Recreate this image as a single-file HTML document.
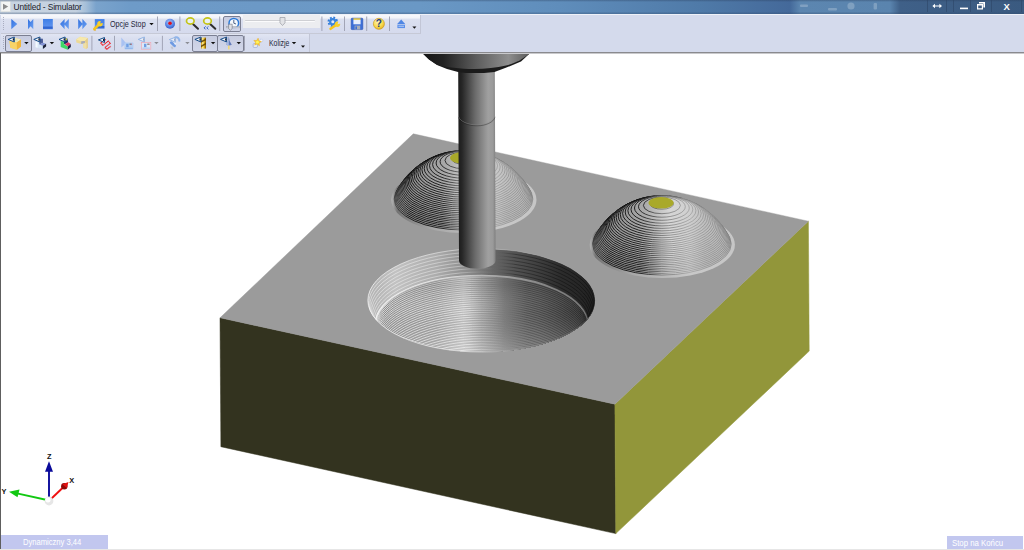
<!DOCTYPE html>
<html lang="pl">
<head>
<meta charset="utf-8">
<title>Untitled - Simulator</title>
<style>
html,body{margin:0;padding:0;}
body{width:1024px;height:550px;overflow:hidden;background:#fff;position:relative;font-family:"Liberation Sans",sans-serif;}
#titlebar{position:absolute;left:0;top:0;width:1024px;height:14px;
 background:linear-gradient(to right,#c9d5e2 0px,#c3d0df 76px,#a5bfd9 86px,#7aa3cc 96px,#6e9bc8 130px,#6c99c6 260px,#6a98c5 420px,#5f8dbb 560px,#4f7aa8 700px,#44699a 790px,#5c86b0 800px,#5a84ae 890px,#3f6088 900px,#3a5a80 1024px);}
#titlebar .shade{position:absolute;left:0;top:0;width:1024px;height:14px;background:linear-gradient(to bottom,rgba(40,60,90,.4) 0,rgba(255,255,255,0) 2px,rgba(255,255,255,0) 11.5px,rgba(50,75,110,.32) 13.4px,rgba(50,75,110,.32) 14px);}
#title{position:absolute;left:13.5px;top:1.2px;font-size:8.4px;letter-spacing:-0.15px;line-height:12px;color:#1a1a2a;white-space:nowrap;}
#tbbg{position:absolute;left:0;top:14px;width:1024px;height:39px;background:#d4daec;border-top:1px solid #eef1f8;box-sizing:border-box;}
#tb1{position:absolute;left:1px;top:15px;width:419px;height:18px;background:linear-gradient(to bottom,#f7f8fc 0,#f1f3f9 3px,#dbe0f0 4.2px,#d5daed 18px);border-right:1px solid #c2c6d6;border-bottom:1px solid #c6c9d6;}
#tb2{position:absolute;left:1px;top:34px;width:308px;height:18px;background:linear-gradient(to bottom,#e1e5f3 0,#d9deef 5px,#d5dbee 18px);border-right:1px solid #c2c6d6;}
#tbline{position:absolute;left:0;top:52px;width:1024px;height:1px;background:#8a8a8e;}
#tbline2{position:absolute;left:0;top:53px;width:1024px;height:1px;background:#c9c9cc;}
#leftborder{position:absolute;left:0;top:53px;width:1.3px;height:496px;background:#5e5e5e;}
#bottomline{position:absolute;left:0;top:548.8px;width:1024px;height:1.2px;background:#e6e6e6;}
.status{position:absolute;background:#c2c7ef;color:#fff;font-size:8.7px;line-height:14px;white-space:nowrap;}
#st1{left:1px;top:534.6px;width:107px;height:14.2px;}
#st1 span{position:absolute;left:22px;top:0.8px;transform-origin:0 0;transform:scaleX(0.875);}
#st2{left:946.7px;top:536.2px;width:76.2px;height:12.6px;}
#st2 span{position:absolute;left:5.2px;top:-0.4px;transform-origin:0 0;transform:scaleX(0.898);}
.sep{position:absolute;width:1px;height:15px;background:#b4b7c6;}
.tx{position:absolute;font-size:8.4px;line-height:10px;color:#26263a;white-space:nowrap;transform-origin:0 0;}
svg{position:absolute;left:0;top:0;}
.pbtn{position:absolute;border:1px solid #7b7f92;border-radius:2px;background:linear-gradient(to bottom,#c7cce0,#d2d7ea);}
#slbg{position:absolute;left:243px;top:15px;width:77px;height:13px;background:#ecedf0;}
</style>
</head>
<body>
<!-- 3D viewport -->
<svg id="scene" width="1024" height="550" viewBox="0 0 1024 550">
<defs>
<linearGradient id="gTool" x1="0" x2="1" y1="0" y2="0">
 <stop offset="0" stop-color="#1c1c1c"/><stop offset="0.1" stop-color="#262626"/><stop offset="0.45" stop-color="#6a6a6a"/><stop offset="0.8" stop-color="#a0a0a0"/><stop offset="0.93" stop-color="#9a9a9a"/><stop offset="1" stop-color="#7e7e7e"/>
</linearGradient>
<linearGradient id="gHolder" gradientUnits="userSpaceOnUse" x1="422" x2="530" y1="0" y2="0">
 <stop offset="0" stop-color="#141414"/><stop offset="0.2" stop-color="#222"/><stop offset="0.5" stop-color="#5c5c5c"/><stop offset="0.8" stop-color="#8e8e8e"/><stop offset="1" stop-color="#5a5a5a"/>
</linearGradient>
<linearGradient id="gD1" gradientUnits="userSpaceOnUse" x1="391.5" x2="535.5" y1="0" y2="0">
 <stop offset="0" stop-color="#7a7a7a"/><stop offset="0.15" stop-color="#8e8e8e"/><stop offset="0.38" stop-color="#aaa"/><stop offset="0.55" stop-color="#d6d6d6"/><stop offset="0.68" stop-color="#d0d0d0"/><stop offset="0.8" stop-color="#bebebe"/><stop offset="1" stop-color="#b4b4b4"/>
</linearGradient>
<linearGradient id="gS1" gradientUnits="userSpaceOnUse" x1="391.5" x2="535.5" y1="0" y2="0">
 <stop offset="0" stop-color="#000" stop-opacity="0.3"/><stop offset="0.05" stop-color="#000" stop-opacity="0.5"/><stop offset="0.12" stop-color="#000" stop-opacity="0.82"/><stop offset="0.35" stop-color="#000" stop-opacity="0.8"/><stop offset="0.5" stop-color="#333" stop-opacity="0.5"/><stop offset="0.7" stop-color="#666" stop-opacity="0.35"/><stop offset="1" stop-color="#555" stop-opacity="0.4"/>
</linearGradient>
<linearGradient id="gR1" gradientUnits="userSpaceOnUse" x1="391.5" x2="535.5" y1="0" y2="0">
 <stop offset="0" stop-color="#b4b4b4"/><stop offset="0.04" stop-color="#747474"/><stop offset="0.3" stop-color="#a8a8a8"/><stop offset="0.7" stop-color="#c8c8c8"/><stop offset="1" stop-color="#c6c6c6"/>
</linearGradient>
<linearGradient id="gD2" gradientUnits="userSpaceOnUse" x1="589.9" x2="733.9" y1="0" y2="0">
 <stop offset="0" stop-color="#7a7a7a"/><stop offset="0.15" stop-color="#8e8e8e"/><stop offset="0.38" stop-color="#aaa"/><stop offset="0.55" stop-color="#d6d6d6"/><stop offset="0.68" stop-color="#d0d0d0"/><stop offset="0.8" stop-color="#bebebe"/><stop offset="1" stop-color="#b4b4b4"/>
</linearGradient>
<linearGradient id="gS2" gradientUnits="userSpaceOnUse" x1="589.9" x2="733.9" y1="0" y2="0">
 <stop offset="0" stop-color="#000" stop-opacity="0.3"/><stop offset="0.05" stop-color="#000" stop-opacity="0.5"/><stop offset="0.12" stop-color="#000" stop-opacity="0.82"/><stop offset="0.35" stop-color="#000" stop-opacity="0.8"/><stop offset="0.5" stop-color="#333" stop-opacity="0.5"/><stop offset="0.7" stop-color="#666" stop-opacity="0.35"/><stop offset="1" stop-color="#555" stop-opacity="0.4"/>
</linearGradient>
<linearGradient id="gR2" gradientUnits="userSpaceOnUse" x1="589.9" x2="733.9" y1="0" y2="0">
 <stop offset="0" stop-color="#b4b4b4"/><stop offset="0.04" stop-color="#747474"/><stop offset="0.3" stop-color="#a8a8a8"/><stop offset="0.7" stop-color="#c8c8c8"/><stop offset="1" stop-color="#c6c6c6"/>
</linearGradient>
<clipPath id="cB"><ellipse cx="481.6" cy="300.4" rx="113.7" ry="51.7"/></clipPath>
<linearGradient id="gBw" gradientUnits="userSpaceOnUse" x1="367.9" x2="595.3" y1="0" y2="0">
 <stop offset="0" stop-color="#b0b0b0"/><stop offset="0.12" stop-color="#c2c2c2"/><stop offset="0.3" stop-color="#acacac"/><stop offset="0.45" stop-color="#888"/><stop offset="0.55" stop-color="#666"/><stop offset="0.7" stop-color="#494949"/><stop offset="0.85" stop-color="#2c2c2c"/><stop offset="1" stop-color="#212121"/>
</linearGradient>
<linearGradient id="gBk" gradientUnits="userSpaceOnUse" x1="367.9" x2="595.3" y1="0" y2="0">
 <stop offset="0" stop-color="#fff" stop-opacity="0.6"/><stop offset="0.4" stop-color="#fff" stop-opacity="0.45"/><stop offset="0.52" stop-color="#999" stop-opacity="0.25"/><stop offset="0.65" stop-color="#000" stop-opacity="0.4"/><stop offset="1" stop-color="#000" stop-opacity="0.5"/>
</linearGradient>
<linearGradient id="gBs" gradientUnits="userSpaceOnUse" x1="367.9" x2="595.3" y1="0" y2="0">
 <stop offset="0" stop-color="#767676"/><stop offset="0.1" stop-color="#8e8e8e"/><stop offset="0.3" stop-color="#9a9a9a"/><stop offset="0.42" stop-color="#bcbcbc"/><stop offset="0.5" stop-color="#9a9a9a"/><stop offset="0.6" stop-color="#7a7a7a"/><stop offset="0.75" stop-color="#666"/><stop offset="0.88" stop-color="#4e4e4e"/><stop offset="1" stop-color="#363636"/>
</linearGradient>
<linearGradient id="gBl" gradientUnits="userSpaceOnUse" x1="367.9" x2="595.3" y1="0" y2="0">
 <stop offset="0" stop-color="#fff" stop-opacity="0.75"/><stop offset="0.45" stop-color="#fff" stop-opacity="0.6"/><stop offset="0.56" stop-color="#bbb" stop-opacity="0.3"/><stop offset="0.7" stop-color="#000" stop-opacity="0.3"/><stop offset="1" stop-color="#000" stop-opacity="0.4"/>
</linearGradient>
<linearGradient id="gBi" gradientUnits="userSpaceOnUse" x1="367.9" x2="595.3" y1="0" y2="0">
 <stop offset="0" stop-color="#fff" stop-opacity="0.8"/><stop offset="0.5" stop-color="#e0e0e0" stop-opacity="0.65"/><stop offset="1" stop-color="#9a9a9a" stop-opacity="0.6"/>
</linearGradient>
<linearGradient id="gBe" gradientUnits="userSpaceOnUse" x1="367.9" x2="595.3" y1="0" y2="0">
 <stop offset="0" stop-color="#fff" stop-opacity="0.75"/><stop offset="0.45" stop-color="#e8e8e8" stop-opacity="0.55"/><stop offset="0.7" stop-color="#bbb" stop-opacity="0.25"/><stop offset="1" stop-color="#aaa" stop-opacity="0.3"/>
</linearGradient>
<linearGradient id="gBv" gradientUnits="userSpaceOnUse" x1="0" x2="0" y1="285" y2="352">
 <stop offset="0" stop-color="#000" stop-opacity="0.12"/><stop offset="0.4" stop-color="#888" stop-opacity="0"/><stop offset="1" stop-color="#fff" stop-opacity="0.22"/>
</linearGradient>
</defs>
<polygon points="220,317.8 614.9,404.2 615.8,533.6 220.9,446.7" fill="#33331f" stroke="#33331f" stroke-width="0.5" stroke-linejoin="round"/>
<polygon points="614.9,404.2 808.4,221.2 809.2,351.1 615.8,533.6" fill="#92963a" stroke="#92963a" stroke-width="0.5" stroke-linejoin="round"/>
<polygon points="413.3,133.8 808.4,221.2 614.9,404.2 220,317.8" fill="#9b9b9b" stroke="#9b9b9b" stroke-width="0.4" stroke-linejoin="round"/>
<g id="dome1">
<ellipse cx="463.9" cy="199.8" rx="72.6" ry="33.2" fill="url(#gR1)"/>
<ellipse cx="463.5" cy="199" rx="69.4" ry="31" fill="url(#gD1)" stroke="url(#gS1)" stroke-width="1"/>
<ellipse cx="463.5" cy="197.7" rx="68.7" ry="30.7" fill="url(#gD1)" stroke="url(#gS1)" stroke-width="1"/>
<ellipse cx="463.5" cy="196.3" rx="68" ry="30.4" fill="url(#gD1)" stroke="url(#gS1)" stroke-width="1"/>
<ellipse cx="463.5" cy="195" rx="67.2" ry="30.1" fill="url(#gD1)" stroke="url(#gS1)" stroke-width="1"/>
<ellipse cx="463.5" cy="193.7" rx="66.4" ry="29.7" fill="url(#gD1)" stroke="url(#gS1)" stroke-width="1"/>
<ellipse cx="463.5" cy="192.3" rx="65.6" ry="29.3" fill="url(#gD1)" stroke="url(#gS1)" stroke-width="1"/>
<ellipse cx="463.5" cy="191" rx="64.7" ry="28.9" fill="url(#gD1)" stroke="url(#gS1)" stroke-width="1"/>
<ellipse cx="463.5" cy="189.7" rx="63.7" ry="28.5" fill="url(#gD1)" stroke="url(#gS1)" stroke-width="1"/>
<ellipse cx="463.5" cy="188.3" rx="62.7" ry="28" fill="url(#gD1)" stroke="url(#gS1)" stroke-width="1"/>
<ellipse cx="463.5" cy="187" rx="61.7" ry="27.6" fill="url(#gD1)" stroke="url(#gS1)" stroke-width="1"/>
<ellipse cx="463.5" cy="185.7" rx="60.6" ry="27.1" fill="url(#gD1)" stroke="url(#gS1)" stroke-width="1"/>
<ellipse cx="463.5" cy="184.3" rx="59.4" ry="26.6" fill="url(#gD1)" stroke="url(#gS1)" stroke-width="1"/>
<ellipse cx="463.5" cy="183" rx="58.2" ry="26" fill="url(#gD1)" stroke="url(#gS1)" stroke-width="1"/>
<ellipse cx="463.5" cy="181.7" rx="56.9" ry="25.4" fill="url(#gD1)" stroke="url(#gS1)" stroke-width="1"/>
<ellipse cx="463.5" cy="180.4" rx="55.6" ry="24.8" fill="url(#gD1)" stroke="url(#gS1)" stroke-width="1"/>
<ellipse cx="463.5" cy="179" rx="54.2" ry="24.2" fill="url(#gD1)" stroke="url(#gS1)" stroke-width="1"/>
<ellipse cx="463.5" cy="177.7" rx="52.7" ry="23.5" fill="url(#gD1)" stroke="url(#gS1)" stroke-width="1"/>
<ellipse cx="463.5" cy="176.4" rx="51.1" ry="22.8" fill="url(#gD1)" stroke="url(#gS1)" stroke-width="1"/>
<ellipse cx="463.5" cy="175" rx="49.4" ry="22.1" fill="url(#gD1)" stroke="url(#gS1)" stroke-width="1"/>
<ellipse cx="463.5" cy="173.7" rx="47.6" ry="21.3" fill="url(#gD1)" stroke="url(#gS1)" stroke-width="1"/>
<ellipse cx="463.5" cy="172.4" rx="45.7" ry="20.4" fill="url(#gD1)" stroke="url(#gS1)" stroke-width="1"/>
<ellipse cx="463.5" cy="171" rx="43.7" ry="19.5" fill="url(#gD1)" stroke="url(#gS1)" stroke-width="1"/>
<ellipse cx="463.5" cy="169.7" rx="41.6" ry="18.6" fill="url(#gD1)" stroke="url(#gS1)" stroke-width="1"/>
<ellipse cx="463.5" cy="168.4" rx="39.3" ry="17.5" fill="url(#gD1)" stroke="url(#gS1)" stroke-width="1"/>
<ellipse cx="463.5" cy="167" rx="36.7" ry="16.4" fill="url(#gD1)" stroke="url(#gS1)" stroke-width="1"/>
<ellipse cx="463.5" cy="165.7" rx="34" ry="15.2" fill="url(#gD1)" stroke="url(#gS1)" stroke-width="1"/>
<ellipse cx="463.5" cy="164.4" rx="30.9" ry="13.8" fill="url(#gD1)" stroke="url(#gS1)" stroke-width="1"/>
<ellipse cx="463.5" cy="163" rx="27.4" ry="12.3" fill="url(#gD1)" stroke="url(#gS1)" stroke-width="1"/>
<ellipse cx="463.5" cy="161.7" rx="23.4" ry="10.5" fill="url(#gD1)" stroke="url(#gS1)" stroke-width="1"/>
<ellipse cx="463.5" cy="160.4" rx="18.5" ry="8.3" fill="url(#gD1)" stroke="url(#gS1)" stroke-width="1"/>
<ellipse cx="463.5" cy="159" rx="11.7" ry="5.2" fill="url(#gD1)" stroke="url(#gS1)" stroke-width="1"/>
<ellipse cx="462.7" cy="157.8" rx="12.6" ry="5.8" fill="#a9a92a"/>
</g>
<g id="dome2">
<ellipse cx="662.3" cy="244.8" rx="72.6" ry="33.2" fill="url(#gR2)"/>
<ellipse cx="661.9" cy="244" rx="69.4" ry="31" fill="url(#gD2)" stroke="url(#gS2)" stroke-width="1"/>
<ellipse cx="661.9" cy="242.7" rx="68.7" ry="30.7" fill="url(#gD2)" stroke="url(#gS2)" stroke-width="1"/>
<ellipse cx="661.9" cy="241.3" rx="68" ry="30.4" fill="url(#gD2)" stroke="url(#gS2)" stroke-width="1"/>
<ellipse cx="661.9" cy="240" rx="67.2" ry="30.1" fill="url(#gD2)" stroke="url(#gS2)" stroke-width="1"/>
<ellipse cx="661.9" cy="238.7" rx="66.4" ry="29.7" fill="url(#gD2)" stroke="url(#gS2)" stroke-width="1"/>
<ellipse cx="661.9" cy="237.3" rx="65.6" ry="29.3" fill="url(#gD2)" stroke="url(#gS2)" stroke-width="1"/>
<ellipse cx="661.9" cy="236" rx="64.7" ry="28.9" fill="url(#gD2)" stroke="url(#gS2)" stroke-width="1"/>
<ellipse cx="661.9" cy="234.7" rx="63.7" ry="28.5" fill="url(#gD2)" stroke="url(#gS2)" stroke-width="1"/>
<ellipse cx="661.9" cy="233.3" rx="62.7" ry="28" fill="url(#gD2)" stroke="url(#gS2)" stroke-width="1"/>
<ellipse cx="661.9" cy="232" rx="61.7" ry="27.6" fill="url(#gD2)" stroke="url(#gS2)" stroke-width="1"/>
<ellipse cx="661.9" cy="230.7" rx="60.6" ry="27.1" fill="url(#gD2)" stroke="url(#gS2)" stroke-width="1"/>
<ellipse cx="661.9" cy="229.3" rx="59.4" ry="26.6" fill="url(#gD2)" stroke="url(#gS2)" stroke-width="1"/>
<ellipse cx="661.9" cy="228" rx="58.2" ry="26" fill="url(#gD2)" stroke="url(#gS2)" stroke-width="1"/>
<ellipse cx="661.9" cy="226.7" rx="56.9" ry="25.4" fill="url(#gD2)" stroke="url(#gS2)" stroke-width="1"/>
<ellipse cx="661.9" cy="225.4" rx="55.6" ry="24.8" fill="url(#gD2)" stroke="url(#gS2)" stroke-width="1"/>
<ellipse cx="661.9" cy="224" rx="54.2" ry="24.2" fill="url(#gD2)" stroke="url(#gS2)" stroke-width="1"/>
<ellipse cx="661.9" cy="222.7" rx="52.7" ry="23.5" fill="url(#gD2)" stroke="url(#gS2)" stroke-width="1"/>
<ellipse cx="661.9" cy="221.4" rx="51.1" ry="22.8" fill="url(#gD2)" stroke="url(#gS2)" stroke-width="1"/>
<ellipse cx="661.9" cy="220" rx="49.4" ry="22.1" fill="url(#gD2)" stroke="url(#gS2)" stroke-width="1"/>
<ellipse cx="661.9" cy="218.7" rx="47.6" ry="21.3" fill="url(#gD2)" stroke="url(#gS2)" stroke-width="1"/>
<ellipse cx="661.9" cy="217.4" rx="45.7" ry="20.4" fill="url(#gD2)" stroke="url(#gS2)" stroke-width="1"/>
<ellipse cx="661.9" cy="216" rx="43.7" ry="19.5" fill="url(#gD2)" stroke="url(#gS2)" stroke-width="1"/>
<ellipse cx="661.9" cy="214.7" rx="41.6" ry="18.6" fill="url(#gD2)" stroke="url(#gS2)" stroke-width="1"/>
<ellipse cx="661.9" cy="213.4" rx="39.3" ry="17.5" fill="url(#gD2)" stroke="url(#gS2)" stroke-width="1"/>
<ellipse cx="661.9" cy="212" rx="36.7" ry="16.4" fill="url(#gD2)" stroke="url(#gS2)" stroke-width="1"/>
<ellipse cx="661.9" cy="210.7" rx="34" ry="15.2" fill="url(#gD2)" stroke="url(#gS2)" stroke-width="1"/>
<ellipse cx="661.9" cy="209.4" rx="30.9" ry="13.8" fill="url(#gD2)" stroke="url(#gS2)" stroke-width="1"/>
<ellipse cx="661.9" cy="208" rx="27.4" ry="12.3" fill="url(#gD2)" stroke="url(#gS2)" stroke-width="1"/>
<ellipse cx="661.9" cy="206.7" rx="23.4" ry="10.5" fill="url(#gD2)" stroke="url(#gS2)" stroke-width="1"/>
<ellipse cx="661.9" cy="205.4" rx="18.5" ry="8.3" fill="url(#gD2)" stroke="url(#gS2)" stroke-width="1"/>
<ellipse cx="661.9" cy="204" rx="11.7" ry="5.2" fill="url(#gD2)" stroke="url(#gS2)" stroke-width="1"/>
<ellipse cx="661.1" cy="202.8" rx="12.6" ry="5.8" fill="#a9a92a"/>
</g>
<g id="bowl" clip-path="url(#cB)">
<ellipse cx="481.6" cy="300.4" rx="113.7" ry="51.7" fill="url(#gBw)"/>
<ellipse cx="481.6" cy="303.3" rx="112.8" ry="51.3" fill="url(#gBw)" stroke="url(#gBk)" stroke-width="0.8"/>
<ellipse cx="481.6" cy="306.2" rx="111.9" ry="50.9" fill="url(#gBw)" stroke="url(#gBk)" stroke-width="0.8"/>
<ellipse cx="481.6" cy="309.2" rx="111" ry="50.5" fill="url(#gBw)" stroke="url(#gBk)" stroke-width="0.8"/>
<ellipse cx="481.6" cy="312.1" rx="110.1" ry="50.1" fill="url(#gBw)" stroke="url(#gBk)" stroke-width="0.8"/>
<ellipse cx="481.6" cy="315" rx="109.2" ry="49.7" fill="url(#gBw)" stroke="url(#gBk)" stroke-width="0.8"/>
<ellipse cx="481.6" cy="317.9" rx="108.3" ry="49.3" fill="url(#gBw)" stroke="url(#gBk)" stroke-width="0.8"/>
<ellipse cx="481.6" cy="320.9" rx="107.4" ry="48.9" fill="url(#gBw)" stroke="url(#gBk)" stroke-width="0.8"/>
<ellipse cx="481.6" cy="323.8" rx="106.5" ry="48.5" fill="url(#gBw)" stroke="url(#gBk)" stroke-width="0.8"/>
<ellipse cx="481.6" cy="323.8" rx="106" ry="48.2" fill="url(#gBs)" stroke="url(#gBi)" stroke-width="1.8"/>
<ellipse cx="481.6" cy="325.7" rx="106" ry="48.2" fill="url(#gBs)" stroke="url(#gBl)" stroke-width="0.95"/>
<ellipse cx="481.6" cy="327.6" rx="105.9" ry="48.2" fill="url(#gBs)" stroke="url(#gBl)" stroke-width="0.95"/>
<ellipse cx="481.6" cy="329.4" rx="105.8" ry="48.1" fill="url(#gBs)" stroke="url(#gBl)" stroke-width="0.95"/>
<ellipse cx="481.6" cy="331.3" rx="105.7" ry="48.1" fill="url(#gBs)" stroke="url(#gBl)" stroke-width="0.95"/>
<ellipse cx="481.6" cy="333.2" rx="105.5" ry="48" fill="url(#gBs)" stroke="url(#gBl)" stroke-width="0.95"/>
<ellipse cx="481.6" cy="335.1" rx="105.2" ry="47.9" fill="url(#gBs)" stroke="url(#gBl)" stroke-width="0.95"/>
<ellipse cx="481.6" cy="336.9" rx="105" ry="47.8" fill="url(#gBs)" stroke="url(#gBl)" stroke-width="0.95"/>
<ellipse cx="481.6" cy="338.8" rx="104.7" ry="47.6" fill="url(#gBs)" stroke="url(#gBl)" stroke-width="0.95"/>
<ellipse cx="481.6" cy="340.7" rx="104.3" ry="47.5" fill="url(#gBs)" stroke="url(#gBl)" stroke-width="0.95"/>
<ellipse cx="481.6" cy="342.6" rx="103.9" ry="47.3" fill="url(#gBs)" stroke="url(#gBl)" stroke-width="0.95"/>
<ellipse cx="481.6" cy="344.5" rx="103.5" ry="47.1" fill="url(#gBs)" stroke="url(#gBl)" stroke-width="0.95"/>
<ellipse cx="481.6" cy="346.3" rx="103" ry="46.8" fill="url(#gBs)" stroke="url(#gBl)" stroke-width="0.95"/>
<ellipse cx="481.6" cy="348.2" rx="102.4" ry="46.6" fill="url(#gBs)" stroke="url(#gBl)" stroke-width="0.95"/>
<ellipse cx="481.6" cy="350.1" rx="101.8" ry="46.3" fill="url(#gBs)" stroke="url(#gBl)" stroke-width="0.95"/>
<ellipse cx="481.6" cy="352" rx="101.2" ry="46.1" fill="url(#gBs)" stroke="url(#gBl)" stroke-width="0.95"/>
<ellipse cx="481.6" cy="353.8" rx="100.5" ry="45.7" fill="url(#gBs)" stroke="url(#gBl)" stroke-width="0.95"/>
<ellipse cx="481.6" cy="355.7" rx="99.8" ry="45.4" fill="url(#gBs)" stroke="url(#gBl)" stroke-width="0.95"/>
<ellipse cx="481.6" cy="357.6" rx="99" ry="45.1" fill="url(#gBs)" stroke="url(#gBl)" stroke-width="0.95"/>
<ellipse cx="481.6" cy="359.5" rx="98.2" ry="44.7" fill="url(#gBs)" stroke="url(#gBl)" stroke-width="0.95"/>
<ellipse cx="481.6" cy="361.3" rx="97.3" ry="44.3" fill="url(#gBs)" stroke="url(#gBl)" stroke-width="0.95"/>
<ellipse cx="481.6" cy="363.2" rx="96.4" ry="43.9" fill="url(#gBs)" stroke="url(#gBl)" stroke-width="0.95"/>
<ellipse cx="481.6" cy="365.1" rx="95.4" ry="43.4" fill="url(#gBs)" stroke="url(#gBl)" stroke-width="0.95"/>
<ellipse cx="481.6" cy="367" rx="94.4" ry="42.9" fill="url(#gBs)" stroke="url(#gBl)" stroke-width="0.95"/>
<ellipse cx="481.6" cy="368.9" rx="93.3" ry="42.4" fill="url(#gBs)" stroke="url(#gBl)" stroke-width="0.95"/>
<ellipse cx="481.6" cy="370.7" rx="92.1" ry="41.9" fill="url(#gBs)" stroke="url(#gBl)" stroke-width="0.95"/>
<ellipse cx="481.6" cy="372.6" rx="90.9" ry="41.3" fill="url(#gBs)" stroke="url(#gBl)" stroke-width="0.95"/>
<ellipse cx="481.6" cy="374.5" rx="89.6" ry="40.8" fill="url(#gBs)" stroke="url(#gBl)" stroke-width="0.95"/>
<ellipse cx="481.6" cy="376.4" rx="88.2" ry="40.1" fill="url(#gBs)" stroke="url(#gBl)" stroke-width="0.95"/>
<ellipse cx="481.6" cy="378.2" rx="86.8" ry="39.5" fill="url(#gBs)" stroke="url(#gBl)" stroke-width="0.95"/>
<ellipse cx="481.6" cy="380.1" rx="85.2" ry="38.8" fill="url(#gBs)" stroke="url(#gBl)" stroke-width="0.95"/>
<ellipse cx="481.6" cy="382" rx="83.7" ry="38.1" fill="url(#gBs)" stroke="url(#gBl)" stroke-width="0.95"/>
<ellipse cx="481.6" cy="383.9" rx="82" ry="37.3" fill="url(#gBs)" stroke="url(#gBl)" stroke-width="0.95"/>
<ellipse cx="481.6" cy="385.8" rx="80.2" ry="36.5" fill="url(#gBs)" stroke="url(#gBl)" stroke-width="0.95"/>
<ellipse cx="481.6" cy="387.6" rx="78.3" ry="35.6" fill="url(#gBs)" stroke="url(#gBl)" stroke-width="0.95"/>
<ellipse cx="481.6" cy="389.5" rx="76.4" ry="34.8" fill="url(#gBs)" stroke="url(#gBl)" stroke-width="0.95"/>
<ellipse cx="481.6" cy="391.4" rx="74.3" ry="33.8" fill="url(#gBs)" stroke="url(#gBl)" stroke-width="0.95"/>
<ellipse cx="481.6" cy="323.8" rx="106" ry="48.2" fill="url(#gBv)"/>
</g>
<ellipse cx="481.6" cy="300.4" rx="113.7" ry="51.7" fill="none" stroke="url(#gBe)" stroke-width="1"/>
<g id="tool">
<path d="M458.2,70 L494.8,70 L495.6,260.5 C495.6,265 487.5,268.8 477.3,268.8 C467,268.8 459,265 459,260.5 Z" fill="url(#gTool)"/>
<path d="M422.3,53 L530.2,53 L521,61.4 L506.4,67.6 L494.5,72 L484,73 L466,73 L458,72 L447,69 L437,65 L429,59.5 Z" fill="#1b1b1b"/>
<path d="M422.3,53 L530.2,53 C523,59 516,63 506,65.6 C496,68 486,69 474,69 C460,69 447,67.5 437,64.8 L429,59.5 Z" fill="url(#gHolder)"/>
<path d="M458.4,116.5 C460,121.5 468,125 477,125 C486,125 493.5,121.5 495,116.5" fill="none" stroke="#8a8a8a" stroke-opacity="0.7" stroke-width="0.7"/>
<path d="M458.4,117.3 C460,122.3 468,125.8 477,125.8 C486,125.8 493.5,122.3 495,117.3" fill="none" stroke="#111" stroke-opacity="0.6" stroke-width="0.6"/>
</g>
<g id="gizmo" font-family="Liberation Sans, sans-serif" font-weight="bold" font-size="7.4" fill="#111">
<line x1="47" y1="500" x2="17" y2="493.4" stroke="#12c812" stroke-width="1.8"/>
<polygon points="9,491.8 19.5,489.5 17.5,497.2" fill="#12c812"/>
<line x1="51.5" y1="498.5" x2="63" y2="487.5" stroke="#f01010" stroke-width="1.9"/>
<circle cx="64.3" cy="486.2" r="3.2" fill="#8e0a0a"/>
<polygon points="68.5,482 66.8,488 62.3,484.2" fill="#e01010"/>
<line x1="49" y1="498" x2="49" y2="471" stroke="#0a0a9a" stroke-width="1.9"/>
<polygon points="49,461.3 53,471.8 45,471.8" fill="#0a0a9a"/>
<circle cx="49" cy="501" r="4.4" fill="#e6e6e6"/>
<circle cx="48" cy="499.8" r="2.6" fill="#fff"/>
<text x="47" y="458.6">Z</text>
<text x="69.2" y="482.8">X</text>
<text x="1.6" y="494.2">Y</text>
</g>
</svg>

<div id="titlebar"><div class="shade"></div></div>
<div id="title">Untitled - Simulator</div>
<div id="tbbg"></div>
<div id="tb1"></div>
<div id="tb2"></div>
<div id="tbline"></div><div id="tbline2"></div>
<div id="leftborder"></div>
<div id="bottomline"></div>
<div class="status" id="st1"><span>Dynamiczny 3,44</span></div>
<div class="status" id="st2"><span>Stop na Końcu</span></div>
<div class="pbtn" style="left:223px;top:16px;width:16px;height:14px;"></div>
<div class="pbtn" style="left:5px;top:35px;width:25px;height:15px;"></div>
<div class="pbtn" style="left:192px;top:35px;width:24px;height:15px;"></div>
<div class="pbtn" style="left:217px;top:35px;width:25px;height:15px;"></div>
<div id="slbg"></div>
<div class="tx" id="t1" style="left:110.4px;top:19.1px;transform:scaleX(0.86);">Opcje Stop</div>
<div class="tx" id="t2" style="left:268.5px;top:37.9px;transform:scaleX(0.82);">Kolizje</div>
<svg id="icons" width="1024" height="54" viewBox="0 0 1024 54">
<defs>
<linearGradient id="bl" x1="0" y1="0" x2="1" y2="1"><stop offset="0" stop-color="#2f6fe0"/><stop offset="1" stop-color="#6ea2f2"/></linearGradient>
<linearGradient id="bl2" x1="0" y1="0" x2="0" y2="1"><stop offset="0" stop-color="#3f7fe6"/><stop offset="0.7" stop-color="#5a90ee"/><stop offset="0.78" stop-color="#2f62cc"/><stop offset="1" stop-color="#3a72dc"/></linearGradient>
<radialGradient id="rec" cx="0.45" cy="0.35" r="0.7"><stop offset="0" stop-color="#a8c4f8"/><stop offset="0.6" stop-color="#5a84e4"/><stop offset="1" stop-color="#2c55c4"/></radialGradient>
<radialGradient id="hlp" cx="0.4" cy="0.3" r="0.8"><stop offset="0" stop-color="#fff6b0"/><stop offset="0.6" stop-color="#f8d84a"/><stop offset="1" stop-color="#e0a820"/></radialGradient>
<linearGradient id="gold" x1="0" y1="0" x2="1" y2="0"><stop offset="0" stop-color="#c88a00"/><stop offset="0.35" stop-color="#fff2a0"/><stop offset="0.6" stop-color="#f0c020"/><stop offset="1" stop-color="#7a5200"/></linearGradient>
<linearGradient id="cube" x1="0" y1="0" x2="1" y2="1"><stop offset="0" stop-color="#fbe08a"/><stop offset="1" stop-color="#f0b030"/></linearGradient>
<g id="eye"><path d="M0.3,2.6 L6.4,0.2 L6.4,5.2 Z" fill="#f2f6fc" stroke="#0b4484" stroke-width="0.95" stroke-linejoin="round"/><rect x="4.9" y="1.5" width="1.3" height="2.3" fill="#141c30"/></g>
<g id="eyed"><path d="M0.3,2.6 L6.4,0.2 L6.4,5.2 Z" fill="#e8eefa" stroke="#8fb2e4" stroke-width="0.95" stroke-linejoin="round"/><rect x="5" y="1.5" width="1.2" height="2.3" fill="#a0a8bc"/></g>
<path id="dd" d="M-2.2,-1.1 L2.2,-1.1 L0,1.1 Z"/>
</defs>
<!-- grips -->
<g fill="#a9adc0"><rect x="3" y="17" width="1" height="1"/><rect x="3" y="19" width="1" height="1"/><rect x="3" y="21" width="1" height="1"/><rect x="3" y="23" width="1" height="1"/><rect x="3" y="25" width="1" height="1"/><rect x="3" y="27" width="1" height="1"/><rect x="3" y="29" width="1" height="1"/>
<rect x="3" y="36" width="1" height="1"/><rect x="3" y="38" width="1" height="1"/><rect x="3" y="40" width="1" height="1"/><rect x="3" y="42" width="1" height="1"/><rect x="3" y="44" width="1" height="1"/><rect x="3" y="46" width="1" height="1"/><rect x="3" y="48" width="1" height="1"/></g>
<!-- row 1 -->
<polygon points="11.3,19 17.3,24 11.3,29.2" fill="url(#bl)"/>
<path d="M28,19 L30.6,22 L33.3,19 L33.3,29.2 L30.6,26.2 L28,29.2 Z" fill="url(#bl)"/>
<rect x="43" y="19" width="9.8" height="10.2" fill="url(#bl2)"/>
<path d="M64.6,19 L64.6,29.2 L60,24 Z M68.8,19 L68.8,29.2 L64,24 Z" fill="url(#bl)"/>
<path d="M78.2,19 L82.8,24 L78.2,29.2 Z M82.4,19 L87,24 L82.4,29.2 Z" fill="url(#bl)"/>
<rect x="94.8" y="19.1" width="9.7" height="9.5" fill="url(#bl2)"/>
<g><line x1="94.4" y1="29" x2="98.8" y2="24.6" stroke="#f6c61c" stroke-width="2.7" stroke-linecap="round"/><circle cx="100" cy="23.7" r="2.7" fill="#f8d02a"/><path d="M100.1,23.6 L101.2,19.8 L104.4,22.4 Z" fill="#4c82e8"/><path d="M93.6,30 L96,30.4" stroke="#e0a010" stroke-width="0.6"/></g>
<use href="#dd" x="151.5" y="24.2" fill="#111"/>
<rect x="157" y="16.5" width="1" height="14.5" fill="#a2a5b6"/>
<circle cx="170" cy="23.7" r="5" fill="url(#rec)"/><circle cx="170" cy="23.3" r="1.8" fill="#e0101c"/>
<rect x="179.4" y="16.5" width="1" height="14.5" fill="#a2a5b6"/>
<g><line x1="193.2" y1="24.2" x2="198" y2="28.8" stroke="#2e2e2e" stroke-width="2" stroke-linecap="round"/><ellipse cx="190.3" cy="21" rx="3.8" ry="3.1" fill="#e9f0f2" stroke="#c4c418" stroke-width="1.7"/></g>
<g><line x1="210.4" y1="24.2" x2="215.3" y2="28.8" stroke="#2e2e2e" stroke-width="2" stroke-linecap="round"/><ellipse cx="207.5" cy="21" rx="3.8" ry="3.1" fill="#e9f0f2" stroke="#c4c418" stroke-width="1.7"/><path d="M205.6,26.4 L204.1,27.9 L205.6,29.4 M208.3,26.4 L206.8,27.9 L208.3,29.4" fill="none" stroke="#1c50c8" stroke-width="0.9"/></g>
<rect x="219.2" y="16.5" width="1" height="14.5" fill="#a2a5b6"/>
<g><circle cx="233.8" cy="23.2" r="4.8" fill="#f4f8fc" stroke="#2b7ad8" stroke-width="1.5"/><path d="M233.8,20 L233.8,23.2 L236,24" fill="none" stroke="#26406a" stroke-width="0.8"/><rect x="226.4" y="26.4" width="13" height="1.7" fill="#c4c8d2" stroke="#858994" stroke-width="0.3"/><rect x="226" y="28.2" width="13.6" height="2.6" fill="#cfd4e6"/><path d="M228.6,24.2 L232.2,24.2 L232.2,28.6 L230.4,30.2 L228.6,28.6 Z" fill="#dcdee4" stroke="#5e626e" stroke-width="0.5"/></g>
<!-- slider -->
<rect x="245.2" y="20" width="69.6" height="1" fill="#cfd0d4"/><rect x="245.2" y="21" width="69.6" height="1" fill="#fbfbfc"/>
<path d="M280,17.5 L285,17.5 L285,22.8 L282.5,25.5 L280,22.8 Z" fill="#e2e3e6" stroke="#9a9ca4" stroke-width="0.7"/>
<rect x="321.4" y="16.5" width="1" height="14.5" fill="#a2a5b6"/>
<g><circle cx="332.8" cy="21.8" r="4.3" fill="none" stroke="#2f7bd9" stroke-width="1.9" stroke-dasharray="1.75 1.63"/><circle cx="332.8" cy="21.8" r="3.7" fill="#3a84de"/><circle cx="332.8" cy="21.8" r="1.5" fill="#dfe6f6"/>
<g><line x1="330.6" y1="28.8" x2="336" y2="25" stroke="#f6c61c" stroke-width="2.6" stroke-linecap="round"/><circle cx="337.4" cy="24.3" r="2.7" fill="#f8d02a"/><path d="M337.5,24.2 L338.8,20.6 L341.6,23.2 Z" fill="#d8def0"/></g></g>
<rect x="344" y="16.5" width="1" height="14.5" fill="#a2a5b6"/>
<g><rect x="351.2" y="18.2" width="11.6" height="11.4" rx="0.8" fill="#3c6fd8" stroke="#2a50b0" stroke-width="0.6"/><rect x="353.4" y="18.3" width="7.2" height="1.6" fill="#f4d23c"/><rect x="353.4" y="19.9" width="7.2" height="4.4" fill="#e8effc"/><rect x="354.6" y="25.6" width="5.6" height="4" fill="#a9aeb8"/><rect x="355.4" y="26.4" width="1.6" height="2.8" fill="#3c6fd8"/></g>
<rect x="366.2" y="16.5" width="1" height="14.5" fill="#a2a5b6"/>
<g><circle cx="378.9" cy="23.8" r="5.5" fill="url(#hlp)" stroke="#c99a1e" stroke-width="0.7"/><text x="378.9" y="27.4" text-anchor="middle" font-family="Liberation Sans, sans-serif" font-weight="bold" font-size="10" fill="#1c3c7c">?</text></g>
<rect x="389" y="16.5" width="1" height="14.5" fill="#a2a5b6"/>
<g><path d="M397,24.2 L401.2,19.6 L405.4,24.2 Z" fill="#4f86e4"/><rect x="397.4" y="24.9" width="7.6" height="3.2" fill="#5c90ea"/><rect x="398.4" y="25.8" width="5.6" height="0.9" fill="#b9d0f6"/></g>
<path d="M412.4,26.6 L416.4,26.6 L414.4,28.7 Z" fill="#111"/>
<!-- row 2 -->
<g><path d="M9.4,41.1 L14.7,37.9 L21,39.4 L21,46.5 L16.9,49.7 L10.4,47.8 Z" fill="#f6cf5e"/><path d="M9.4,41.1 L14.7,37.9 L21,39.4 L16.5,42.5 Z" fill="#f6efc6"/><path d="M12,40.9 L14.9,39 L18.8,39.9 L16.4,41.7 Z" fill="#dfe6b8"/><path d="M16.5,42.5 L21,39.4 L21,46.5 L16.9,49.7 Z" fill="#f0b63c"/><path d="M9.4,41.1 L16.5,42.5 L16.9,49.7 L10.4,47.8 Z" fill="#f8d468"/><use href="#eye" x="7.9" y="36.8"/></g>
<use href="#dd" x="26.4" y="43.2" fill="#111"/>
<g><path d="M35.6,41.5 L39.4,42.6 L39.4,44.6 L42.9,45.8 L42.9,49 L35.6,47.3 Z" fill="#d9e8f8"/><path d="M35.6,41.5 L37.6,42.1 L37.6,47.8 L35.6,47.3 Z" fill="#f4fafe"/><path d="M39.4,38.4 L42.9,38.8 L43,42.8 L39.4,44.6 Z" fill="#4d5d98"/><path d="M39.4,44.6 L43,42.8 L46.1,43.7 L42.9,45.8 Z" fill="#8293d6"/><path d="M42.9,45.8 L46.1,43.7 L46.1,46.6 L42.9,49 Z" fill="#1a2038"/><use href="#eye" x="33.5" y="36.8"/></g>
<use href="#dd" x="51.9" y="43.2" fill="#111"/>
<g><path d="M60.7,41.1 L63.9,41.6 L63.9,44.3 L67.8,46.5 L67.8,49.7 L60.7,46.9 Z" fill="#3fd866"/><path d="M64.4,38.4 L67.4,38.6 L68.2,42.2 L64.8,44.3 L63.9,43.6 Z" fill="#1c3264"/><path d="M64.6,38.4 L67.3,38.6 L66.6,40.4 L64.6,40.2 Z" fill="#dcd23c"/><path d="M64.8,44.3 L68.2,42.2 L70.8,43.9 L67.8,46.5 Z" fill="#e23468"/><path d="M67.8,46.5 L70.8,43.9 L70.8,46.9 L67.8,49.7 Z" fill="#1a2040"/><use href="#eye" x="58.7" y="36.8"/></g>
<g><path d="M76.1,39.6 L80,36.8 L87.7,38.1 L87.7,47.8 L86.4,49 L83.4,47.8 L83.4,43.6 L81.2,44.1 L76.3,42.6 Z" fill="#ecd896"/><path d="M76.1,39.6 L80,36.8 L87.7,38.1 L84.9,40.9 L81.2,41.3 Z" fill="#f6e8ac"/><path d="M81.2,41.3 L84.9,40.9 L84.9,43.2 L81.2,44.1 Z" fill="#a8acba"/><path d="M84.9,40.9 L87.7,38.1 L87.7,47.8 L86.4,49 L86.4,43 Z" fill="#e4cc8a"/><path d="M83.4,43.4 L86.4,43 L86.4,49 L83.4,47.8 Z" fill="#efdfa6"/></g>
<rect x="91.4" y="35.8" width="1" height="14.8" fill="#a2a5b6"/>
<g><path d="M105.6,39.4 L100.8,43 L102.8,45.3 L108.4,41 L110.3,43.3 L104.8,47.6 L106.8,49.3 L110.9,46.2" fill="none" stroke="#ee1c24" stroke-width="1.15" stroke-linejoin="round" stroke-dasharray="1.1 0.35"/><use href="#eye" x="98.1" y="37.3"/></g>
<rect x="114" y="35.8" width="1" height="14.8" fill="#a2a5b6"/>
<g><path d="M121.3,37.6 L126.2,43.2 L121.3,47.6 Z" fill="#a9c2f2"/><rect x="124.4" y="42.4" width="9" height="7" rx="0.8" fill="#b4cef2"/><rect x="126.2" y="43.8" width="2.4" height="3.4" fill="#6f9ee4"/><rect x="129.6" y="43.6" width="1.2" height="1.2" fill="#4a6a5a"/><rect x="130.8" y="43.6" width="1" height="1.2" fill="#c05060"/><rect x="125" y="47.8" width="7.8" height="1" fill="#8eb4ea"/></g>
<g><rect x="141.4" y="42.4" width="9.4" height="6.8" fill="#dce8f8" stroke="#efa8b4" stroke-width="0.7"/><rect x="144" y="43.8" width="2.4" height="3.4" fill="#6f9ee4"/><rect x="147.4" y="43.6" width="1.2" height="1.2" fill="#4a6a5a"/><rect x="148.6" y="43.6" width="1" height="1.2" fill="#c05060"/><rect x="142.4" y="47.6" width="7.4" height="1" fill="#a8c6f0"/><use href="#eyed" x="138" y="36.8"/></g>
<use href="#dd" x="156.4" y="43.2" fill="#8c8e96"/>
<rect x="161.9" y="35.8" width="1" height="14.8" fill="#a2a5b6"/>
<g><path d="M174.8,37.5 C177.8,36.6 180,38.8 179.2,41.6" stroke="#8fb4ea" stroke-width="2" fill="none"/><path d="M171.2,42.6 L174.6,45.8" stroke="#6f9be2" stroke-width="2.7" stroke-linecap="round"/><path d="M173.8,42.2 L176.4,43.6 L175,45 Z" fill="#eef2fa"/><path d="M170.4,46.8 L172.8,46.6 L173.4,48.6 L172,49.6 Z" fill="#c2c6d0"/><use href="#eyed" x="169" y="37"/></g>
<use href="#dd" x="187.4" y="43.2" fill="#8c8e96"/>
<g><rect x="201" y="37.6" width="5" height="11" fill="url(#gold)"/><path d="M201,41 L206,38.6 L206,40.2 L201,42.8 Z M201,45.4 L206,42.8 L206,44.4 L201,47.2 Z" fill="#5a3c00" opacity="0.85"/><use href="#eye" x="194.6" y="36.8"/></g>
<use href="#dd" x="213.1" y="43.2" fill="#111"/>
<g><path d="M228.8,36.8 L229.6,41 L231.8,44.8 L229.6,45.6 L228,45.6 L226.2,44.6 L228,41 Z" fill="#657cba"/><path d="M228.8,36.8 L228.8,45.6 L228,45.6 L226.2,44.6 L228,41 Z" fill="#a9bbe4"/><rect x="228" y="45.6" width="1.6" height="3.8" fill="#f2da78"/><use href="#eye" x="220.2" y="36.8"/></g>
<use href="#dd" x="238.8" y="43.2" fill="#111"/>
<rect x="244" y="35.8" width="1" height="14.8" fill="#a2a5b6"/>
<g><rect x="253.2" y="43.6" width="4.2" height="3.8" rx="0.8" fill="#eceff4" stroke="#8a98c8" stroke-width="0.6"/><path d="M259.2,40.6 L261.2,38.8 L263,40.8 L261,42.8 Z" fill="#f6f8fc" stroke="#a4b4dc" stroke-width="0.5"/><polygon points="258.1,38.2 258.8,40.9 261.4,41.5 259.1,43.0 259.4,45.7 257.2,44.0 254.7,45.1 255.7,42.5 253.9,40.4 256.7,40.6" fill="#f9d432" stroke="#eaa81c" stroke-width="0.5"/><circle cx="257.4" cy="42.2" r="1.4" fill="#fff45a"/></g>
<use href="#dd" x="294" y="43.2" fill="#111"/>
<path d="M301,45.6 L305,45.6 L303,47.7 Z" fill="#111"/>
<rect x="1" y="1.8" width="9.4" height="9.9" fill="#f4f5f4" stroke="#d8d8d0" stroke-width="0.4"/><path d="M3,3.7 L8.2,6.6 L3,9.8 Z" fill="#8b8b8b"/>
<g fill="#fff" opacity="0.22"><rect x="800" y="4.5" width="8" height="2.4" rx="1"/><rect x="828" y="8" width="9" height="2.4" rx="1"/><circle cx="851" cy="6" r="3.6"/><rect x="873.6" y="3" width="3.4" height="6.5" rx="1"/></g>
<!-- window controls -->
<g stroke="#2c4464" stroke-opacity="0.55" stroke-width="1"><line x1="927.5" y1="0" x2="927.5" y2="12"/><line x1="946.5" y1="0" x2="946.5" y2="12"/><line x1="953.5" y1="0" x2="953.5" y2="12"/><line x1="970.5" y1="0" x2="970.5" y2="12"/><line x1="991.5" y1="0" x2="991.5" y2="12"/><line x1="1021.5" y1="0" x2="1021.5" y2="12"/></g>
<g fill="#fff" stroke="none"><path d="M932.4,6 L935,3.8 L935,5.4 L939.4,5.4 L939.4,3.8 L942,6 L939.4,8.2 L939.4,6.6 L935,6.6 L935,8.2 Z"/><rect x="960" y="7.6" width="8" height="1.6"/><path d="M977,4 L983,4 L983,9.4 L977,9.4 Z M978.2,5.4 L978.2,8.2 L981.8,8.2 L981.8,5.4 Z" fill-rule="evenodd"/><path d="M979,2 L985,2 L985,7.4 L983.4,7.4 L983.4,3.4 L979,3.4 Z"/></g>
<text x="1003.4" y="9.6" font-family="Liberation Sans, sans-serif" font-weight="bold" font-size="9.5" fill="#fff">X</text>
</svg>
</body>
</html>
